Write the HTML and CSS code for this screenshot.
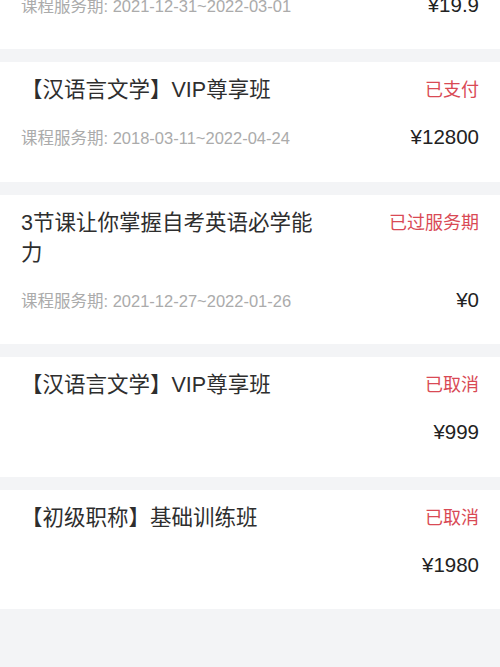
FILE: index.html
```html
<!DOCTYPE html>
<html lang="zh-CN">
<head>
    <meta charset="UTF-8">
    <meta name="viewport" content="width=device-width, initial-scale=1.0">
    <title>我的订单</title>
    <link rel="stylesheet" href="styles.css">
</head>
<body>
    <div class="order-list">
        <div class="order-card">
            <div class="order-head">
                <div class="order-title">【会计从业】入门体验课</div>
                <div class="order-status">已过服务期</div>
            </div>
            <div class="order-meta">
                <span class="order-date">课程服务期: 2021-12-31~2022-03-01</span>
                <span class="order-price">¥19.9</span>
            </div>
        </div>

        <div class="order-card">
            <div class="order-head">
                <div class="order-title">【汉语言文学】VIP尊享班</div>
                <div class="order-status">已支付</div>
            </div>
            <div class="order-meta">
                <span class="order-date">课程服务期: 2018-03-11~2022-04-24</span>
                <span class="order-price">¥12800</span>
            </div>
        </div>

        <div class="order-card">
            <div class="order-head">
                <div class="order-title">3节课让你掌握自考英语必学能力</div>
                <div class="order-status">已过服务期</div>
            </div>
            <div class="order-meta">
                <span class="order-date">课程服务期: 2021-12-27~2022-01-26</span>
                <span class="order-price">¥0</span>
            </div>
        </div>

        <div class="order-card">
            <div class="order-head">
                <div class="order-title">【汉语言文学】VIP尊享班</div>
                <div class="order-status">已取消</div>
            </div>
            <div class="order-meta">
                <span class="order-date"></span>
                <span class="order-price">¥999</span>
            </div>
        </div>

        <div class="order-card">
            <div class="order-head">
                <div class="order-title">【初级职称】基础训练班</div>
                <div class="order-status">已取消</div>
            </div>
            <div class="order-meta">
                <span class="order-date"></span>
                <span class="order-price">¥1980</span>
            </div>
        </div>
    </div>
</body>
</html>
```

FILE: styles.css
```css
body {
    margin: 0;
    background-color: #f3f4f6;
    font-family: "Liberation Sans", "Noto Sans CJK SC", sans-serif;
    color: #333333;
    overflow: hidden;
}
/* list is scrolled: the first card is half above the top edge */
.order-list {
    display: flex;
    flex-direction: column;
    gap: 13px;
    margin-top: -70.5px;
}
.order-card {
    background-color: #ffffff;
    padding: 13px 21px 29.5px;
}
.order-head {
    display: flex;
    justify-content: space-between;
    align-items: flex-start;
}
.order-title {
    max-width: 305px;
    font-size: 21.5px;
    line-height: 30px;
    color: #2e2e2e;
}
.order-status {
    font-size: 18px;
    line-height: 30px;
    color: #d94a55;
    white-space: nowrap;
}
.order-meta {
    display: flex;
    justify-content: space-between;
    align-items: center;
    height: 30px;
    margin-top: 17px;
}
.order-date {
    font-size: 16.5px;
    color: #ababab;
}
.order-price {
    font-size: 20.5px;
    font-weight: 500;
    color: #222222;
}
```
